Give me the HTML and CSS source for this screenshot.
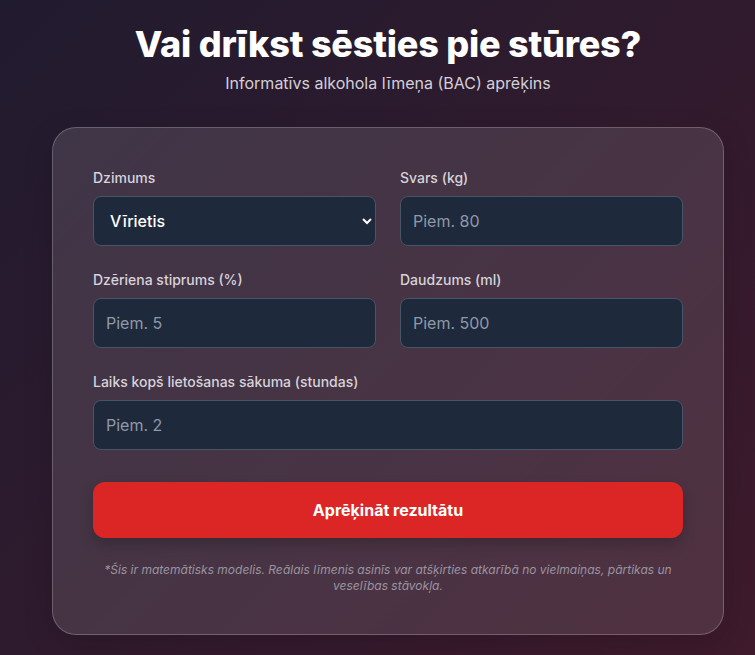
FILE: index.html
```html
<!DOCTYPE html>
<html lang="lv">
<head>
  <meta charset="UTF-8" />
  <meta name="viewport" content="width=device-width, initial-scale=1.0"/>
  <title>BAC kalkulators</title>
  <link rel="stylesheet" href="styles.css">
</head>
<body>

  <div class="page">
    <header class="page-header">
      <h1>Vai drīkst sēsties pie stūres?</h1>
      <p>Informatīvs alkohola līmeņa (BAC) aprēķins</p>
    </header>

    <div class="calc-card">
      <div class="form-grid">
        <div class="field">
          <label for="gender">Dzimums</label>
          <select id="gender">
            <option value="m">Vīrietis</option>
            <option value="f">Sieviete</option>
          </select>
        </div>
        <div class="field">
          <label for="weight">Svars (kg)</label>
          <input type="number" id="weight" placeholder="Piem. 80" />
        </div>
        <div class="field">
          <label for="strength">Dzēriena stiprums (%)</label>
          <input type="number" id="strength" placeholder="Piem. 5" />
        </div>
        <div class="field">
          <label for="amount">Daudzums (ml)</label>
          <input type="number" id="amount" placeholder="Piem. 500" />
        </div>
        <div class="field full">
          <label for="hours">Laiks kopš lietošanas sākuma (stundas)</label>
          <input type="number" id="hours" placeholder="Piem. 2" />
        </div>
      </div>

      <button class="calc-btn">Aprēķināt rezultātu</button>

      <p class="note">*Šis ir matemātisks modelis. Reālais līmenis asinīs var atšķirties atkarībā no vielmaiņas, pārtikas un veselības stāvokļa.</p>
    </div>
  </div>

</body>
</html>
```

FILE: styles.css
```css
body {
  margin: 0;
  font-family: Inter, 'Noto Sans', sans-serif;
  background: linear-gradient(135deg, #211b2f, #3e1a2c);
  color: #fff;
  min-height: 100vh;
}

.page {
  width: 672px;
  margin-left: 52px;
  padding-top: 22px;
}

.page-header {
  text-align: center;
}

.page-header h1 {
  margin: 0;
  font-size: 36px;
  line-height: 44px;
  font-weight: 800;
  letter-spacing: -0.2px;
}

.page-header p {
  margin: 5px 0 0;
  font-size: 16px;
  line-height: 24px;
  color: #d4d0d8;
}

.calc-card {
  margin-top: 32px;
  padding: 40px;
  background: linear-gradient(135deg, rgba(255, 255, 255, 0.12), rgba(255, 255, 255, 0.1));
  border: 1px solid rgba(255, 255, 255, 0.22);
  border-radius: 24px;
  box-shadow: 0 8px 30px rgba(0, 0, 0, 0.15);
}

.form-grid {
  display: grid;
  grid-template-columns: 1fr 1fr;
  column-gap: 24px;
  row-gap: 24px;
}

.field {
  display: flex;
  flex-direction: column;
}

.field.full {
  grid-column: 1 / -1;
}

.field label {
  font-size: 14px;
  line-height: 20px;
  font-weight: 500;
  color: #d6d3da;
  margin-bottom: 8px;
}

.field input,
.field select {
  box-sizing: border-box;
  height: 50px;
  padding: 0 12px;
  background: #1e293b;
  border: 1px solid #475569;
  border-radius: 8px;
  color: #fff;
  font-family: inherit;
  font-size: 16px;
  color-scheme: dark;
}

.field select {
  font-weight: 500;
}

.field input::placeholder {
  color: #8f99a8;
}

.calc-btn {
  display: block;
  width: 100%;
  height: 56px;
  margin-top: 32px;
  background-color: #dc2626;
  color: #fff;
  border: none;
  border-radius: 12px;
  font-family: inherit;
  font-size: 16px;
  font-weight: 700;
  cursor: pointer;
  box-shadow: 0 6px 14px rgba(0, 0, 0, 0.2);
}

.note {
  margin: 24px 0 0;
  font-size: 12px;
  line-height: 16px;
  font-style: italic;
  text-align: center;
  color: #9a94a0;
}
```
